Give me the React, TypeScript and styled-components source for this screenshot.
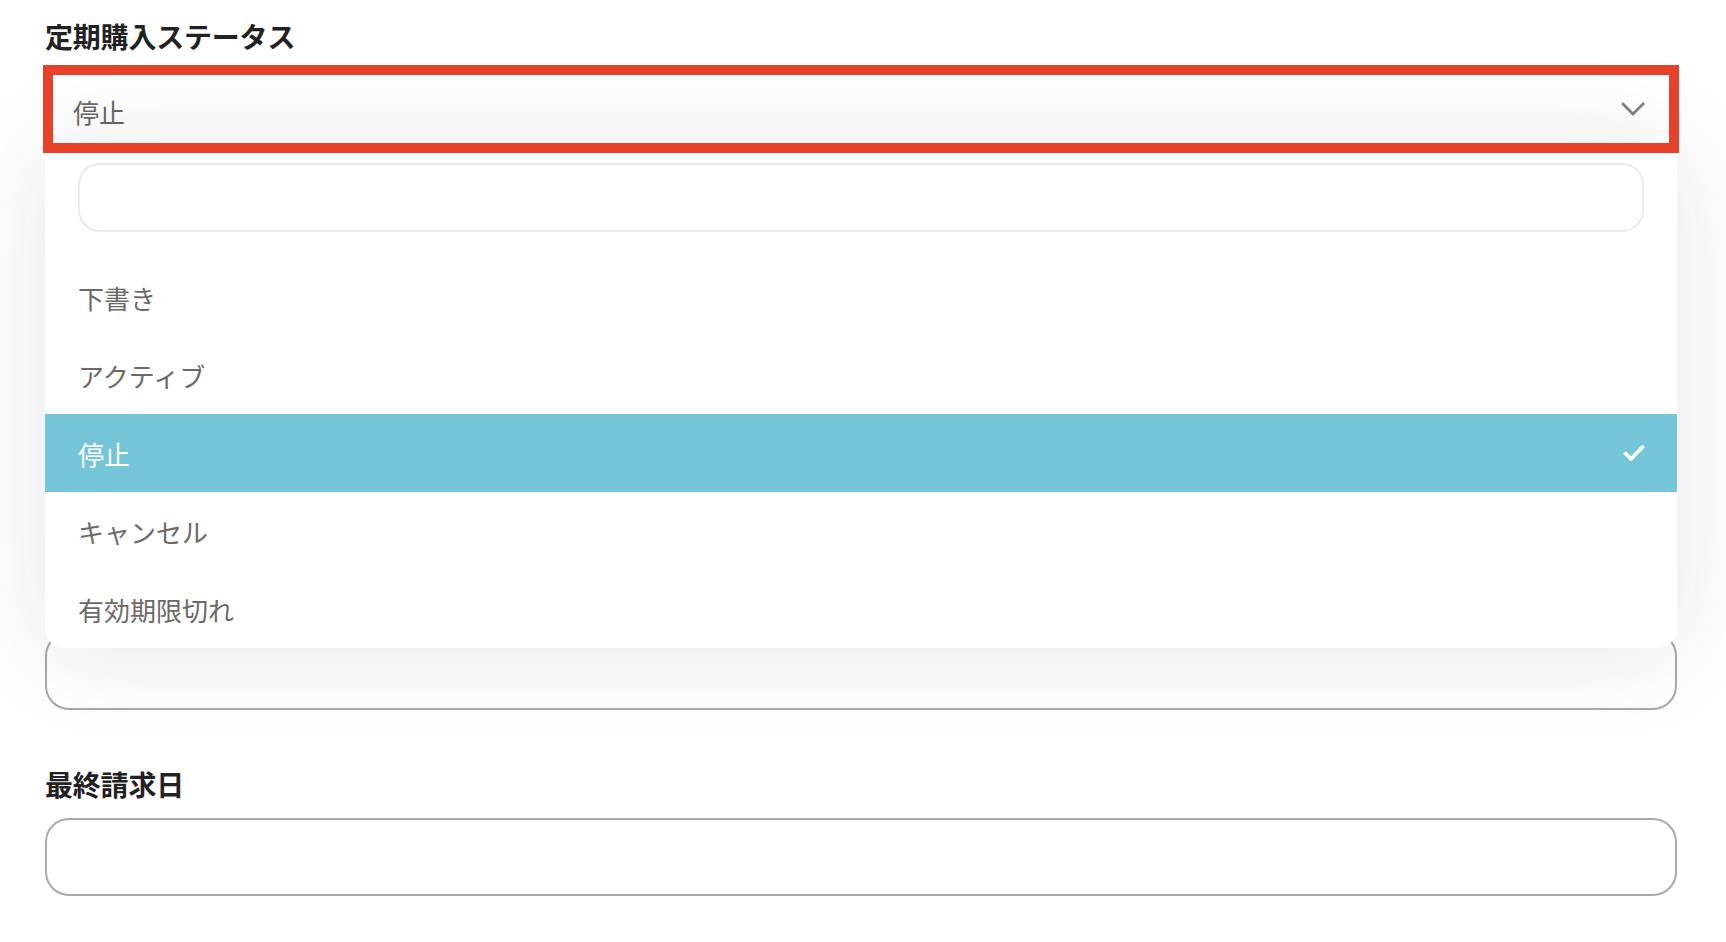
import React from "react";
import styled, { createGlobalStyle } from "styled-components";

const GlobalStyle = createGlobalStyle`
  html, body {
    margin: 0;
    padding: 0;
    background: #ffffff;
  }
  body {
    font-family: "Noto Sans CJK JP", "Noto Sans", sans-serif;
    -webkit-font-smoothing: antialiased;
  }
  * { box-sizing: border-box; }
`;

const Page = styled.div`
  width: 1726px;
  height: 942px;
  overflow: hidden;
  padding: 18px 49px 0 45px;
`;

const Form = styled.div`
  display: flex;
  flex-direction: column;
  gap: 56px;
`;

const Field = styled.div<{ $extraBottom?: number }>`
  display: flex;
  flex-direction: column;
  padding-bottom: ${(p) => p.$extraBottom ?? 0}px;
`;

const Label = styled.div`
  min-height: 36px;
  font-size: 28px;
  line-height: 36px;
  font-weight: 700;
  color: #222222;
  letter-spacing: -0.2px;
`;

const TextInput = styled.div`
  margin-top: 16px;
  height: 78px;
  border: 2px solid #a9a9a9;
  border-radius: 24px;
  background: #ffffff;
`;

const SelectArea = styled.div`
  position: relative;
  margin: 21px 8px 0;
`;

const SelectBox = styled.div`
  height: 68px;
  display: flex;
  align-items: center;
  justify-content: space-between;
  padding: 0 24px 0 20px;
  background: #ffffff;
  border-radius: 4px;
`;

const SelectValue = styled.span`
  font-size: 26px;
  color: #696866;
  margin-top: 5px;
`;

const Annotation = styled.div`
  position: absolute;
  inset: -10px;
  border: 10px solid #e8412a;
  z-index: 3;
  pointer-events: none;
`;

const Menu = styled.div`
  position: absolute;
  top: 100%;
  left: -8px;
  right: -8px;
  z-index: 2;
  background: #ffffff;
  border-radius: 0 0 20px 20px;
  box-shadow: 0 4px 100px rgba(30, 30, 70, 0.11);
  padding-top: 20px;
  display: flex;
  flex-direction: column;
  overflow: hidden;
`;

const Search = styled.div`
  margin: 0 33px;
  height: 69px;
  border: 2px solid #eeeae5;
  border-radius: 22px;
  background: #ffffff;
`;

const OptionList = styled.div`
  margin-top: 26px;
  display: flex;
  flex-direction: column;
`;

const Option = styled.div<{ $selected?: boolean }>`
  height: 78px;
  display: flex;
  align-items: center;
  justify-content: space-between;
  padding: 0 32px 0 33px;
  font-size: 26px;
  color: ${(p) => (p.$selected ? "#ffffff" : "#6c6966")};
  background: ${(p) => (p.$selected ? "#74c5d7" : "transparent")};
`;

const Chevron = () => (
  <svg width="24" height="16" viewBox="0 0 24 16" fill="none">
    <polyline
      points="2,3 12,13 22,3"
      stroke="#86827a"
      strokeWidth="2.8"
      strokeLinecap="square"
      strokeLinejoin="miter"
    />
  </svg>
);

const Check = () => (
  <svg width="22" height="18" viewBox="0 0 22 18" fill="none">
    <polyline
      points="2.5,9.5 8,15 19.5,3"
      stroke="#ffffff"
      strokeWidth="3.8"
      strokeLinecap="round"
      strokeLinejoin="round"
    />
  </svg>
);

const options = ["下書き", "アクティブ", "停止", "キャンセル", "有効期限切れ"];
const selected = "停止";

/* Fields that sit underneath the open menu; their labels are covered. */
const coveredFields = ["a", "b", "c"];

export default function App() {
  return (
    <>
      <GlobalStyle />
      <Page>
        <Form>
          <Field $extraBottom={9}>
            <Label>定期購入ステータス</Label>
            <SelectArea>
              <SelectBox>
                <SelectValue>{selected}</SelectValue>
                <Chevron />
              </SelectBox>
              <Annotation />
              <Menu>
                <Search />
                <OptionList>
                  {options.map((o) => (
                    <Option key={o} $selected={o === selected}>
                      <span>{o}</span>
                      {o === selected && <Check />}
                    </Option>
                  ))}
                </OptionList>
              </Menu>
            </SelectArea>
          </Field>
          {coveredFields.map((f) => (
            <Field key={f}>
              <Label />
              <TextInput />
            </Field>
          ))}
          <Field>
            <Label>最終請求日</Label>
            <TextInput />
          </Field>
        </Form>
      </Page>
    </>
  );
}
